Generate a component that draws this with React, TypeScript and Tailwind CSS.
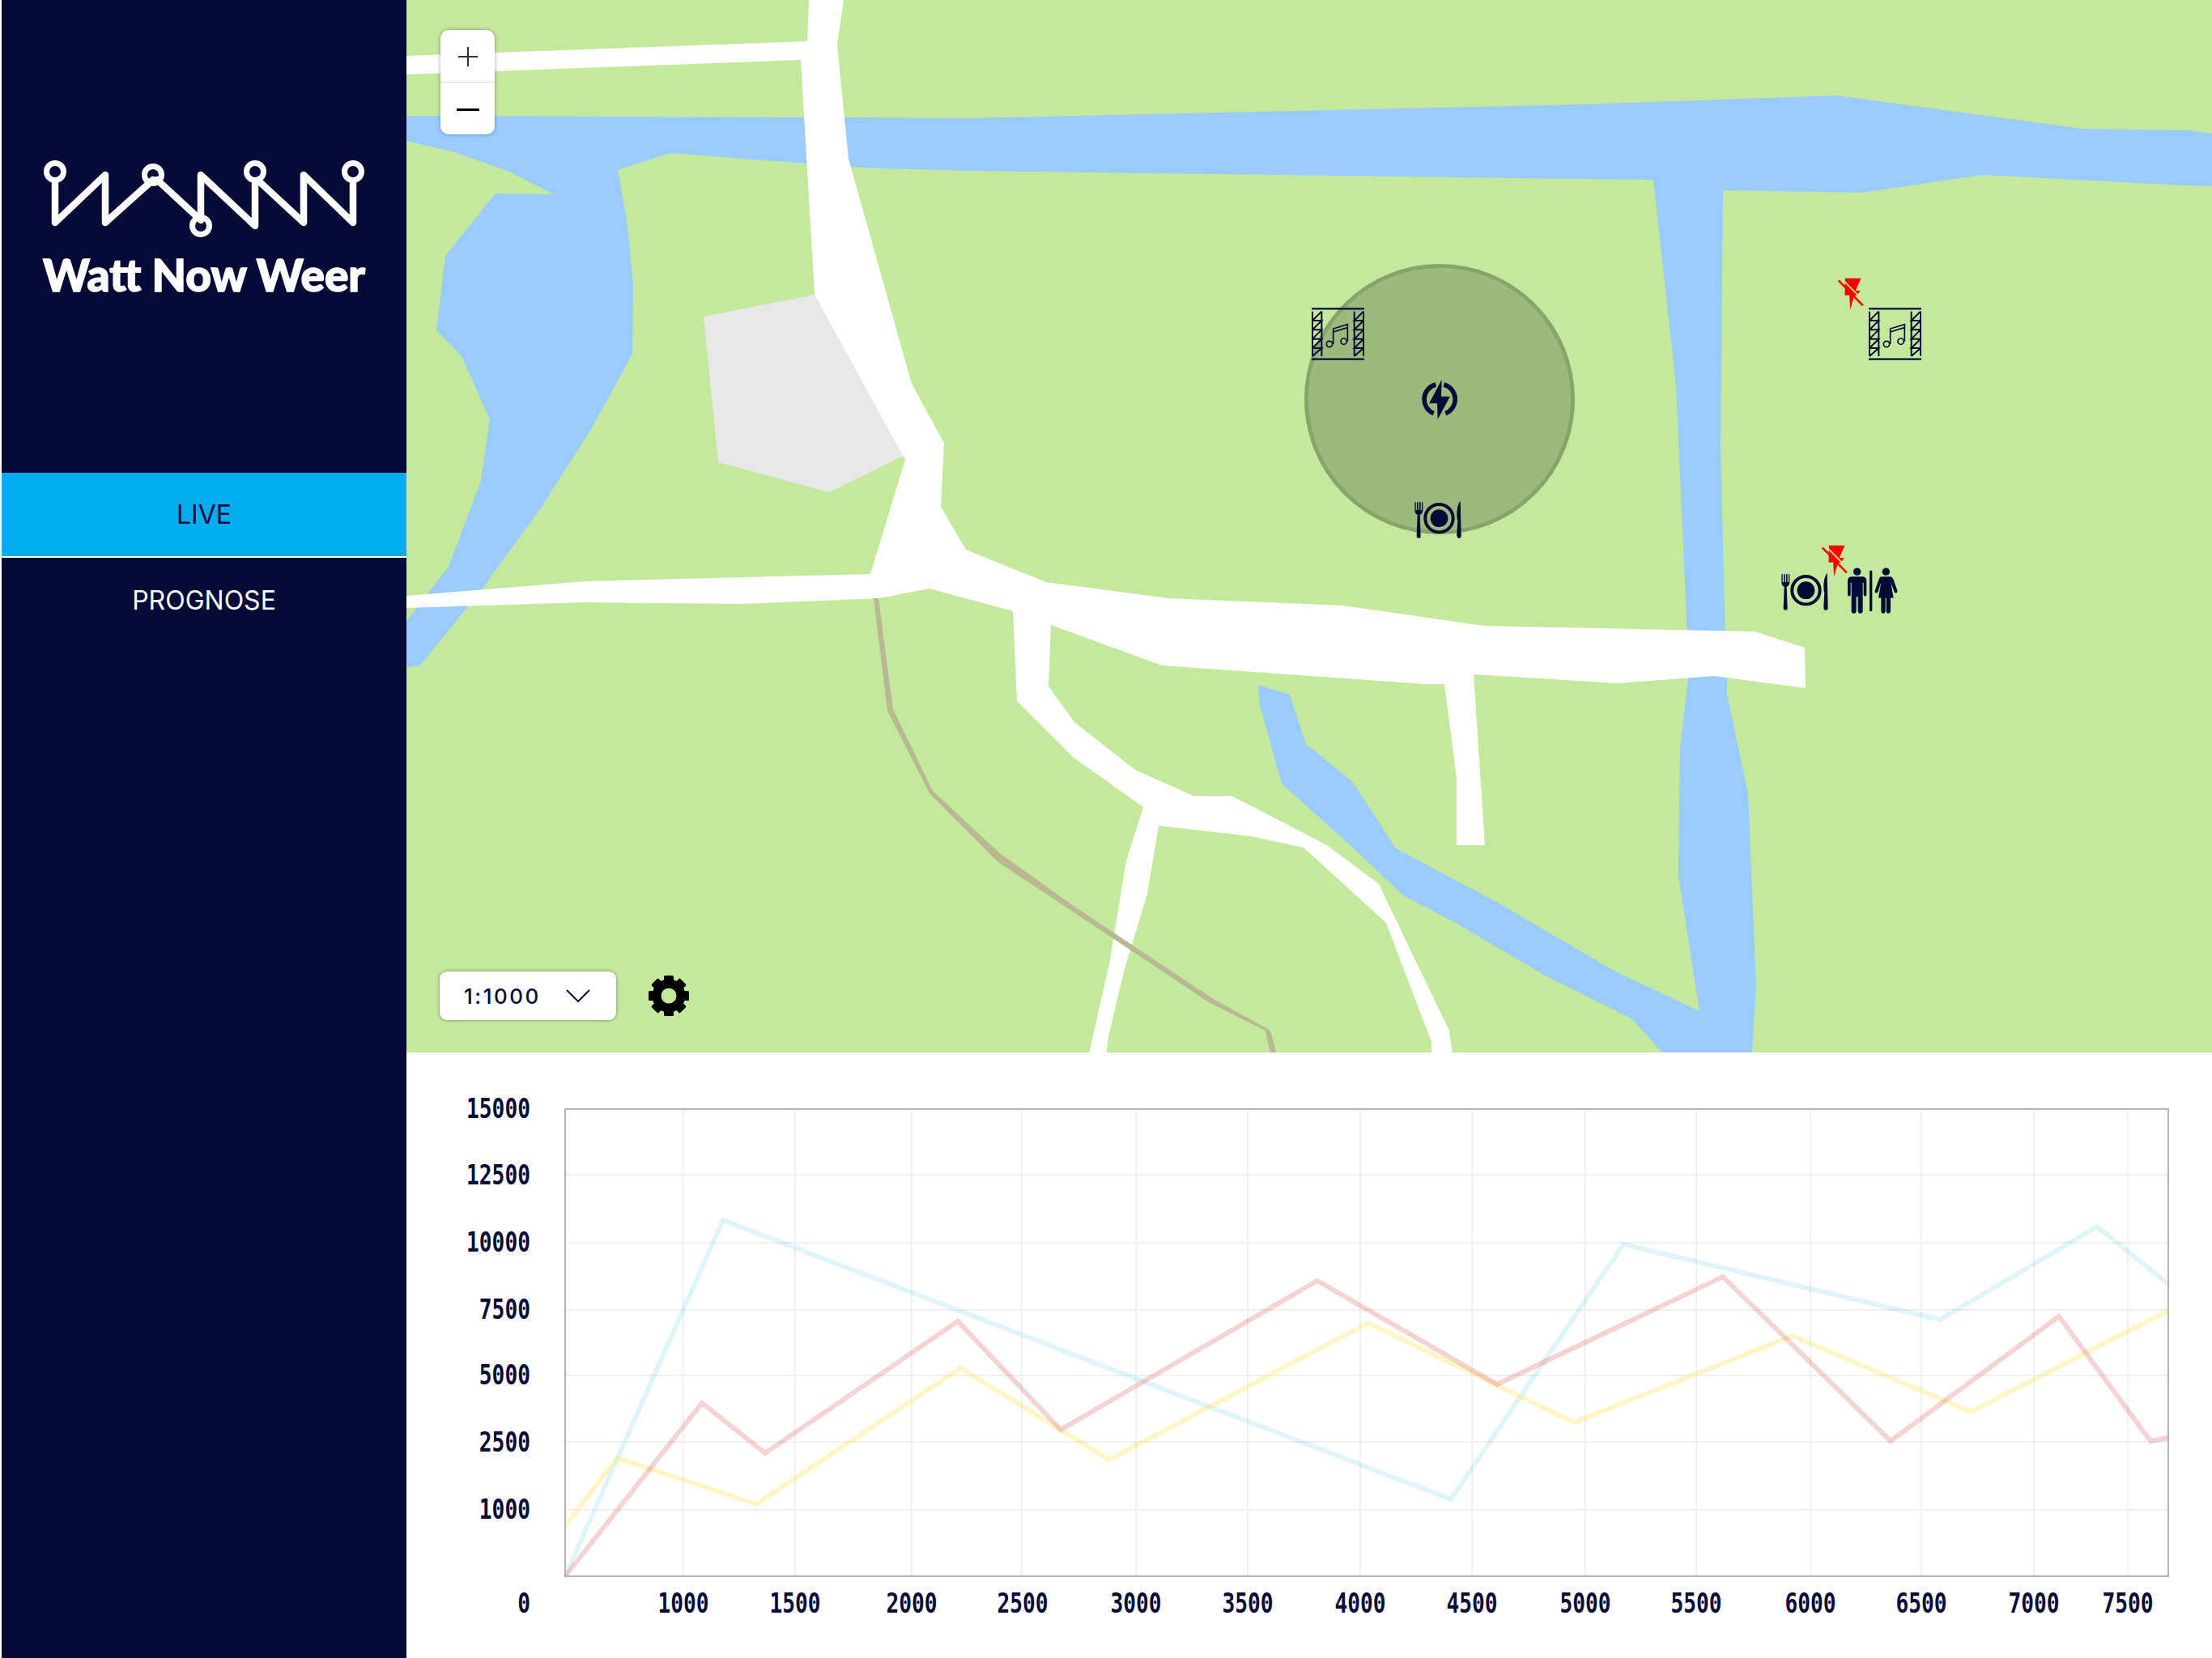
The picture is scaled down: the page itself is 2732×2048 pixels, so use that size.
const navy = "#050a36"

// map shapes, in page pixels (viewBox starts at the sidebar edge)
const rivers = [
  "502,143 993,145 1200,146 1950,129 2269,118 2571,159 2703,161 2732,165 2732,230 2698,229 2449,216 2299,238 2128,235 2125,553 2132,830 2086,830 2070,477 2042,222 1950,221 1200,211 1087,208 1050,206 996,202 828,189 763,210 775,279 782,350 781,437 732,527 667,629 615,700 599,723 519,822 502,824 502,767 554,700 594,594 605,518 570,440 539,408 550,316 612,239 684,240 629,212 562,188 502,174",
  "2086,830 2133,830 2133,858 2159,980 2169,1218 2164,1300 2053,1300 2015,1258 1910,1206 1798,1140 1733,1106 1672,1048 1583,968 1556,871 1554,846 1593,858 1613,919 1670,965 1724,1048 1848,1114 1995,1200 2099,1249 2073,1082 2075,924",
]

const road =
  "999,0 1042,0 1034,56 1048,196 1126,474 1166,547 1162,626 1193,679 1292,719 1444,739 1659,748 1833,773 2167,780 2229,800 2230,850 2117,835 1997,844 1820,833 1834,1044 1799,1044 1799,961 1784,845 1759,845 1435,822 1298,772 1295,848 1327,892 1402,951 1474,983 1521,983 1639,1044 1703,1092 1747,1184 1790,1273 1795,1310 1769,1310 1768,1287 1712,1140 1610,1047 1545,1033 1431,1020 1417,1104 1388,1200 1368,1285 1366,1310 1343,1310 1370,1191 1391,1063 1412,997 1325,935 1256,866 1251,755 1148,727 1086,739 918,746 723,744 502,751 502,736 723,718 1075,709 1118,568 1006,364 989,74 502,92 502,69 997,51"

const plaza = "869,391 1006,364 1116,563 1024,608 887,571"

const pad =
  "1079,739 1085,739 1103,876 1152,977 1235,1054 1326,1119 1497,1233 1569,1273 1579,1310 1571,1310 1563,1273 1493,1238 1233,1065 1148,980 1096,878"

// chart data
const gridX = [844, 982, 1126, 1262, 1403, 1541, 1680, 1818, 1958, 2095, 2236, 2373, 2512, 2628]
const gridY = [1451, 1535, 1618, 1699, 1781, 1865]

const xLabels = [
  { t: "1000", x: 844 },
  { t: "1500", x: 982 },
  { t: "2000", x: 1126 },
  { t: "2500", x: 1263 },
  { t: "3000", x: 1403 },
  { t: "3500", x: 1541 },
  { t: "4000", x: 1680 },
  { t: "4500", x: 1818 },
  { t: "5000", x: 1958 },
  { t: "5500", x: 2095 },
  { t: "6000", x: 2236 },
  { t: "6500", x: 2373 },
  { t: "7000", x: 2512 },
  { t: "7500", x: 2628 },
]

const yLabels = [
  { t: "15000", y: 1369 },
  { t: "12500", y: 1451 },
  { t: "10000", y: 1534 },
  { t: "7500", y: 1617 },
  { t: "5000", y: 1698 },
  { t: "2500", y: 1781 },
  { t: "1000", y: 1864 },
  { t: "0", y: 1980 },
]

const blueLine = "698,1947 893,1507 1792,1852 2005,1537 2396,1630 2590,1515 2678,1586"
const redLine =
  "698,1947 867,1733 945,1795 1183,1632 1310,1766 1627,1582 1849,1710 2128,1577 2335,1780 2543,1626 2656,1780 2678,1776"
const yellowLine =
  "698,1885 762,1801 934,1858 1186,1690 1370,1803 1690,1634 1944,1757 2214,1650 2434,1744 2678,1619"

function Logo() {
  return (
    <svg viewBox="50 195 404 100" className="w-[404px] h-[100px]" fill="none" stroke="white" strokeWidth="8.5" strokeLinecap="round" strokeLinejoin="round">
      <path d="M68 224V275L130 216V275L189 222" />
      <path d="M194 222L248 272V216L315 279V224" />
      <path d="M320 224L375 275V216L436 275V224" />
      <circle cx="68" cy="212" r="10.5" strokeWidth="7" />
      <circle cx="189" cy="216" r="10.5" strokeWidth="7" />
      <circle cx="248" cy="279" r="10.5" strokeWidth="7" />
      <circle cx="315" cy="212" r="10.5" strokeWidth="7" />
      <circle cx="436" cy="212" r="10.5" strokeWidth="7" />
    </svg>
  )
}

function Stage({ x, y }: { x: number; y: number }) {
  const tower = "M3 14V180M37 14V180M37 14L3 48H37L3 82H37L3 116H37L3 150H37L3 180"
  return (
    <svg x={x} y={y} width="65" height="65" viewBox="0 0 195 195" fill="none" stroke={navy} strokeWidth="6">
      <path d="M0 4H195M0 191H195" strokeWidth="7" />
      <path d={tower} />
      <path d={tower} transform="translate(155 0)" />
      <circle cx="66" cy="135" r="11" strokeWidth="5" />
      <circle cx="119" cy="125" r="11" strokeWidth="5" />
      <path d="M80 135V78L133 62V125M80 90L133 74" strokeWidth="5" />
    </svg>
  )
}

function Food({ x, y }: { x: number; y: number }) {
  return (
    <svg x={x} y={y} width="58" height="47" viewBox="0 0 175 142" fill={navy}>
      <path d="M1 7V38Q1 50 11 54L8 132Q8 141 16 141Q24 141 23 132L20 54Q31 50 31 38V7H27V36H23V7H18V36H14V7H9V36H5V7Z" />
      <circle cx="92" cy="67" r="52" fill="none" stroke={navy} strokeWidth="12" />
      <circle cx="92" cy="67" r="33" />
      <path d="M171 2Q160 15 158 45Q158 70 161 75L158 130Q158 141 166 141Q175 141 174 130Z" />
    </svg>
  )
}

function Power({ x, y }: { x: number; y: number }) {
  return (
    <svg x={x} y={y} width="44" height="49" viewBox="0 0 132 148" fill={navy}>
      <path d="M74 0L27 88H57L59 148L105 63H72Z" />
      <path d="M52 18A57 57 0 0 0 44 126M82 18A57 57 0 0 1 88 126" fill="none" stroke={navy} strokeWidth="17" />
    </svg>
  )
}

function NoPower({ x, y }: { x: number; y: number }) {
  return (
    <svg x={x} y={y} width="32" height="40" viewBox="0 0 95 120" fill="none">
      <path d="M26 2H85L65 48H83L70 66H60L45 118L42 65H25Z" fill="#ff0000" />
      <path d="M14 4L94 86" stroke="#c4e89c" strokeWidth="5" />
      <path d="M2 10L92 103" stroke="#ff0000" strokeWidth="8" />
    </svg>
  )
}

function Toilets({ x, y }: { x: number; y: number }) {
  return (
    <svg x={x} y={y} width="62" height="57" viewBox="0 0 186 170" fill={navy}>
      <circle cx="35" cy="15" r="14" />
      <path d="M16 33H54Q70 33 70 49V100Q70 106 65 106Q60 106 59 100V56H56V160Q56 170 47 170Q39 170 38 160V108H32V160Q31 170 23 170Q14 170 14 160V56H11V100Q10 106 5 106Q0 106 0 100V49Q0 33 16 33Z" />
      <rect x="81" y="10" width="10" height="152" rx="5" />
      <circle cx="142" cy="15" r="14" />
      <path d="M126 33H158Q165 33 169 42L184 85Q186 92 180 94Q175 95 173 90L160 55L170 112H159V160Q158 170 150 170Q144 170 143 160V112H140V160Q139 170 132 170Q125 170 124 160V112H114L124 55L112 90Q110 95 105 94Q99 92 101 85L116 42Q119 33 126 33Z" />
    </svg>
  )
}

function Gear() {
  const teeth = [0, 45, 90, 135, 180, 225, 270, 315]
  return (
    <svg viewBox="0 0 50 50" className="w-[50px] h-[50px]">
      {teeth.map((a) => (
        <rect key={a} x="19" y="0" width="12" height="10" rx="1.5" transform={`rotate(${a} 25 25)`} />
      ))}
      <circle cx="25" cy="25" r="15" fill="none" stroke="black" strokeWidth="11" />
    </svg>
  )
}

function MapView() {
  return (
    <div className="relative h-[1300px] overflow-hidden bg-[#c4e89c]">
      <svg viewBox="502 0 2230 1300" className="absolute inset-0 w-full h-full">
        {rivers.map((r) => (
          <polygon key={r} points={r} fill="#9acbff" />
        ))}
        <polygon points={plaza} fill="#e8e8e8" />
        <polygon points={road} fill="white" />
        <polygon points={pad} fill="#b9b892" />

        <circle cx="1778" cy="493" r="164.5" fill="#9dba7d" stroke="#88a36b" strokeWidth="5" />

        <Stage x={1620} y={380} />
        <Power x={1756} y={469} />
        <Food x={1747} y={618} />

        <NoPower x={2270} y={343} />
        <Stage x={2308} y={380} />
        <NoPower x={2250} y={673} />
        <Food x={2200} y={707} />
        <Toilets x={2282} y={701} />
      </svg>

      {/* ZOOM */}
      <div className="absolute left-[42px] top-[37px] w-[67px] h-[129px] flex flex-col bg-white rounded-[10px] shadow-[0_0_5px_rgba(0,0,0,0.35)]">
        <div className="flex-1 flex items-center justify-center border-b border-[#dddddd] pt-[2px]">
          <svg width="24" height="24" viewBox="0 0 24 24" stroke="#333333" strokeWidth="2">
            <path d="M0 12H24M12 0V24" />
          </svg>
        </div>
        <div className="flex-1 flex items-center justify-center pt-[2px]">
          <div className="w-[28px] h-[3px] bg-black" />
        </div>
      </div>

      {/* SCHAAL */}
      <div className="absolute left-[41px] top-[1200px] flex items-center gap-[40px]">
        <div className="w-[218px] h-[60px] flex items-center pl-[30px] gap-[33px] bg-white rounded-[9px] shadow-[0_0_4px_rgba(0,0,0,0.4)]">
          <span className="w-[93px] text-[26px] font-medium tracking-[2.5px] text-[#050a36] font-['Inter','Noto_Sans',sans-serif]">
            1:1000
          </span>
          <svg width="30" height="16" viewBox="0 0 30 16" fill="none" stroke="#050a36" strokeWidth="2">
            <path d="M1 1L15 15L29 1" />
          </svg>
        </div>
        <Gear />
      </div>
    </div>
  )
}

function Chart() {
  return (
    <div className="flex-1 bg-white">
      <svg viewBox="502 1300 2230 748" className="block w-full h-[748px]" fill="none">
        {gridX.map((x) => (
          <path key={x} d={`M${x} 1370V1947`} stroke="#f0f0f0" strokeWidth="2" />
        ))}
        {gridY.map((y) => (
          <path key={y} d={`M698 ${y}H2678`} stroke="#f0f0f0" strokeWidth="2" />
        ))}

        <polyline points={blueLine} stroke="#00aacc" strokeOpacity="0.12" strokeWidth="6" />
        <polyline points={yellowLine} stroke="#ffdd22" strokeOpacity="0.25" strokeWidth="6" />
        <polyline points={redLine} stroke="#cc2222" strokeOpacity="0.2" strokeWidth="6" />

        <rect x="698" y="1370" width="1980" height="577" stroke="#b3b3b3" strokeWidth="2" />

        <g fill={navy} fontFamily="'DejaVu Sans Mono', monospace" fontWeight="700" fontSize="34">
          {yLabels.map((l) => (
            <text key={l.t} x={655} y={l.y + 12} textAnchor="end" textLength={l.t.length * 15.8} lengthAdjust="spacingAndGlyphs">
              {l.t}
            </text>
          ))}
          {xLabels.map((l) => (
            <text key={l.t} x={l.x} y={1992} textAnchor="middle" textLength={l.t.length * 15.8} lengthAdjust="spacingAndGlyphs">
              {l.t}
            </text>
          ))}
        </g>
      </svg>
    </div>
  )
}

export default function App() {
  return (
    <div className="flex w-[2732px] h-[2048px] pl-[2px] bg-white overflow-hidden">
      <aside className="w-[500px] shrink-0 flex flex-col bg-[#050a36] text-white">
        <div className="h-[584px] pt-[195px] flex flex-col items-center">
          <Logo />
          <div className="mt-[9px] text-[55px] leading-[70px] font-black font-['Lato','Noto_Sans',sans-serif] whitespace-nowrap [-webkit-text-stroke:1.5px_white]">
            Watt Now Weer
          </div>
        </div>

        <nav className="flex flex-col font-['Inter','Noto_Sans',sans-serif] text-[32px]">
          <div className="h-[105px] flex items-center justify-center bg-[#00aeef] text-[#050a36] border-b-2 border-white">
            LIVE
          </div>
          <div className="h-[105px] flex items-center justify-center">
            PROGNOSE
          </div>
        </nav>
      </aside>

      <main className="flex-1 flex flex-col min-w-0">
        <MapView />
        <Chart />
      </main>
    </div>
  )
}
